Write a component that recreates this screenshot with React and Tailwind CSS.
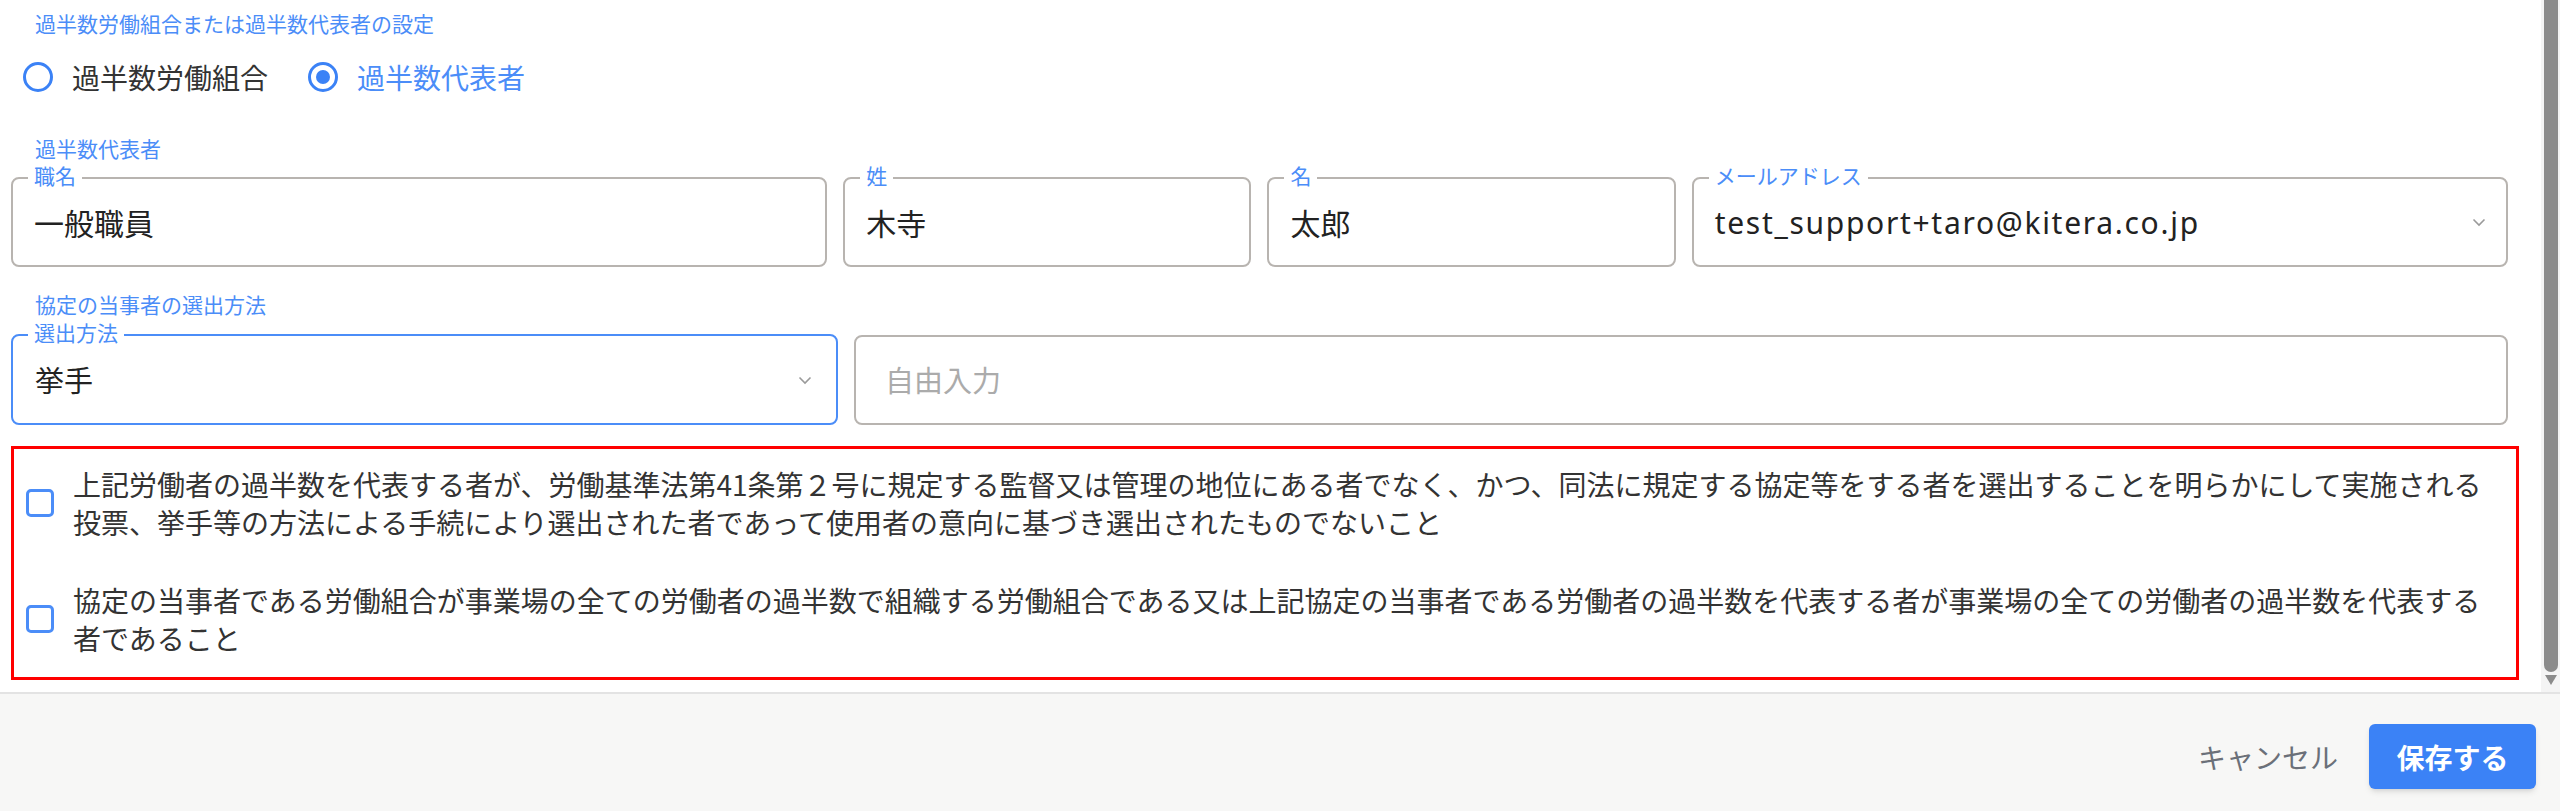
import { useState } from 'react'

const BLUE = 'text-[#4b8df8]'

function Chevron() {
  return (
    <svg width="14" height="9" viewBox="0 0 14 9" className="shrink-0">
      <path d="M1.5 1.5 L7 7 L12.5 1.5" fill="none" stroke="#9a9a9a" strokeWidth="1.6" />
    </svg>
  )
}

function Field({ label, value, focused, chevron, wide }) {
  return (
    <fieldset
      className={`h-[102px] rounded-[8px] border-2 pb-[12px] ${focused ? 'border-[#4b8df8]' : 'border-[#b8b4b0]'}`}
    >
      <legend className={`ml-[15px] px-[6px] pb-[6px] text-[21px] leading-[20px] ${BLUE}`}>{label}</legend>
      <div className="flex h-[62px] items-center justify-between pl-[21px] pr-[20px]">
        <span
          className={`text-[30px] text-[#222] ${wide ? "font-['Noto_Sans','Noto_Sans_CJK_JP',sans-serif] tracking-[1.7px]" : ''}`}
        >
          {value}
        </span>
        {chevron && <Chevron />}
      </div>
    </fieldset>
  )
}

function Radio({ checked, label, onClick }) {
  return (
    <button className="flex items-center gap-[19px]" onClick={onClick}>
      <span className="flex h-[30px] w-[30px] items-center justify-center rounded-full border-[3px] border-[#3b82f6]">
        {checked && <span className="h-[14px] w-[14px] rounded-full bg-[#3b82f6]" />}
      </span>
      <span className={`text-[28px] leading-[40px] ${checked ? BLUE : 'text-[#333]'}`}>{label}</span>
    </button>
  )
}

function Check({ children }) {
  const [on, setOn] = useState(false)
  return (
    <label className="flex items-center gap-[19px]">
      <span
        onClick={() => setOn(!on)}
        className={`h-[28px] w-[28px] shrink-0 rounded-[5px] border-[3px] border-[#4b8df8] ${on ? 'bg-[#4b8df8]' : ''}`}
      />
      <span className="w-[2424px] text-[28px] leading-[38px] text-[#333]">{children}</span>
    </label>
  )
}

export default function App() {
  const [kind, setKind] = useState('rep')

  return (
    <div className="flex h-[811px] w-[2560px] flex-col overflow-hidden bg-white font-['Noto_Sans_CJK_JP',sans-serif]">
      <div className="flex h-[694px] shrink-0 border-b-2 border-[#e3e3e3]">
        <div className="flex-1 pl-[11px] pr-[22px]">
          <p className={`pl-[24px] pt-[9px] text-[21px] leading-[28px] ${BLUE}`}>
            過半数労働組合または過半数代表者の設定
          </p>
          <div className="mt-[20px] flex h-[40px] items-center gap-[40px] pl-[12px]">
            <Radio checked={kind === 'union'} label="過半数労働組合" onClick={() => setKind('union')} />
            <Radio checked={kind === 'rep'} label="過半数代表者" onClick={() => setKind('rep')} />
          </div>

          <p className={`mt-[37px] pl-[24px] text-[21px] leading-[28px] ${BLUE}`}>過半数代表者</p>
          <div className="mr-[11px] mt-[3px] grid grid-cols-[2fr_1fr_1fr_2fr] gap-[16px]">
            <Field label="職名" value="一般職員" />
            <Field label="姓" value="木寺" />
            <Field label="名" value="太郎" />
            <Field label="メールアドレス" value="test_support+taro@kitera.co.jp" chevron wide />
          </div>

          <p className={`mt-[23px] pl-[24px] text-[21px] leading-[28px] ${BLUE}`}>協定の当事者の選出方法</p>
          <div className="mr-[11px] mt-[4px] grid grid-cols-[1fr_2fr] items-end gap-[16px]">
            <fieldset className="h-[103px] rounded-[8px] border-2 border-[#4b8df8] pb-[11px]">
              <legend className={`ml-[15px] px-[6px] pb-[6px] text-[21px] leading-[20px] ${BLUE}`}>選出方法</legend>
              <div className="flex h-[64px] items-center justify-between pl-[22px] pr-[24px]">
                <span className="text-[29px] text-[#222]">挙手</span>
                <Chevron />
              </div>
            </fieldset>
            <div className="flex h-[90px] items-center rounded-[8px] border-2 border-[#b8b4b0] pl-[29px]">
              <span className="text-[29px] text-[#ababab]">自由入力</span>
            </div>
          </div>

          <div className="mt-[21px] flex h-[234px] flex-col gap-[40px] border-[3px] border-[#ff0000] pl-[12px] pt-[16px]">
            <Check>
              上記労働者の過半数を代表する者が、労働基準法第41条第２号に規定する監督又は管理の地位にある者でなく、かつ、同法に規定する協定等をする者を選出することを明らかにして実施される投票、挙手等の方法による手続により選出された者であって使用者の意向に基づき選出されたものでないこと
            </Check>
            <Check>
              協定の当事者である労働組合が事業場の全ての労働者の過半数で組織する労働組合である又は上記協定の当事者である労働者の過半数を代表する者が事業場の全ての労働者の過半数を代表する者であること
            </Check>
          </div>
        </div>

        <div className="flex w-[19px] flex-col items-center bg-[#f4f4f4]">
          <div className="h-[672px] w-[14px] rounded-b-full bg-[#8b8b8b]" />
          <svg width="12" height="10" viewBox="0 0 12 10" className="mt-[3px]">
            <path d="M0 0 H12 L6 10 Z" fill="#8b8b8b" />
          </svg>
        </div>
      </div>

      <footer className="flex flex-1 items-center justify-end gap-[31px] bg-[#f7f7f6] pr-[24px] pt-[8px]">
        <button className="text-[28px] text-[#6b7079]">キャンセル</button>
        <button className="h-[65px] w-[167px] rounded-[6px] bg-[#3b82f6] text-[28px] font-bold text-white shadow-md">
          保存する
        </button>
      </footer>
    </div>
  )
}
